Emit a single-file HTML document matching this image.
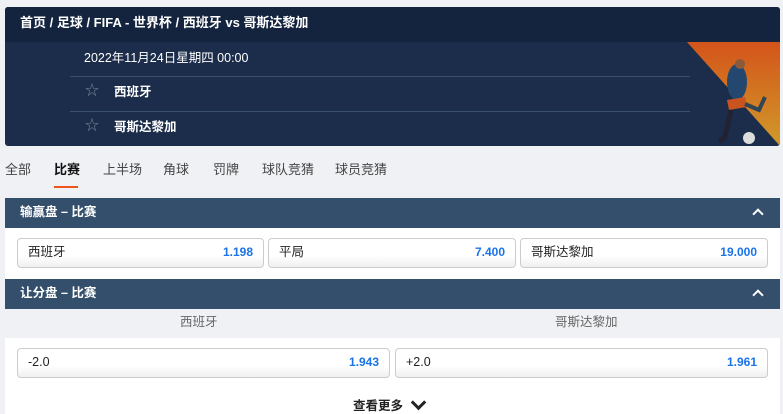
<!DOCTYPE html><html><head><meta charset="utf-8"><style>
*{box-sizing:border-box;margin:0;padding:0}
body{width:783px;height:414px;overflow:hidden;background:#f0f1f5;font-family:"Liberation Sans","Noto Sans CJK SC",sans-serif;font-size:12px;color:#222;position:relative;line-height:1.2}
.abs{position:absolute}
.hd{left:5px;top:7px;width:775px;height:139px;background:#1b2d4a;border-radius:3px;overflow:hidden}
.bc{left:0;top:0;width:775px;height:35px;background:#14243f;color:#fff;font-weight:bold;font-size:13px;padding:0 0 0 15px;line-height:32px}
.line{height:1px;background:#3a5070;left:65px;width:620px}
.t{color:#fff;font-size:12.5px}
.star{color:#7b8699;font-size:14px}
.tab{top:162px;font-size:13px;color:#444}
.sec{left:5px;width:775px;height:30px;background:#344f6b;color:#fff;font-weight:bold;font-size:12.5px;padding:0 0 0 15px;line-height:28px}
.car{right:18px;top:12px;width:8px;height:8px;border-left:2.5px solid #fff;border-top:2.5px solid #fff;transform:rotate(45deg)}
.wh{left:5px;width:775px;background:#fff}
.btn{height:30px;border:1px solid #ccc;border-radius:4px;background:linear-gradient(#fff 60%,#f0f0f0);padding:0 10px;font-size:12.5px;line-height:26px}
.btn b{float:right;color:#1a73e8;font-weight:bold;font-size:12px}
</style></head><body>
<div class="abs hd">
<div class="abs bc">首页 / 足球 / FIFA - 世界杯 / 西班牙 vs 哥斯达黎加</div>
<div class="abs t" style="left:79px;top:44px">2022年11月24日星期四 00:00</div>
<div class="abs line" style="top:69px"></div>
<div class="abs star" style="left:80px;top:75px">☆</div>
<div class="abs t" style="left:109px;top:78px;font-weight:bold">西班牙</div>
<div class="abs line" style="top:104px"></div>
<div class="abs star" style="left:80px;top:110px">☆</div>
<div class="abs t" style="left:109px;top:113px;font-weight:bold">哥斯达黎加</div>
<svg class="abs" style="left:682px;top:35px" width="93" height="104"><defs><linearGradient id="g" x1="0" y1="0" x2="0" y2="1"><stop offset="0" stop-color="#d4541a"/><stop offset="1" stop-color="#d09a2a"/></linearGradient></defs><polygon points="0,0 93,0 93,104" fill="url(#g)"/>
<ellipse cx="50" cy="40" rx="10" ry="18" fill="#23476e"/><circle cx="53" cy="22" r="5" fill="#8a5a3a"/><path d="M40 58 L58 55 L60 65 L42 68Z" fill="#c9541f"/><path d="M44 68 L38 95 L32 100" stroke="#223" stroke-width="5" fill="none"/><path d="M58 62 L72 68 L78 55" stroke="#345" stroke-width="4" fill="none"/><circle cx="62" cy="96" r="6" fill="#ddd"/></svg>
</div>
<div class="abs tab" style="left:5px">全部</div>
<div class="abs tab" style="left:54px;color:#111;font-weight:bold">比赛</div>
<div class="abs" style="left:54px;top:186px;width:24px;height:2px;background:#f0541e"></div>
<div class="abs tab" style="left:103px">上半场</div>
<div class="abs tab" style="left:163px">角球</div>
<div class="abs tab" style="left:213px">罚牌</div>
<div class="abs tab" style="left:262px">球队竞猜</div>
<div class="abs tab" style="left:335px">球员竞猜</div>
<div class="abs sec" style="top:198px">输赢盘 – 比赛<div class="abs car"></div></div>
<div class="abs wh" style="top:228px;height:51px"></div>
<div class="abs btn" style="left:17px;top:238px;width:247px">西班牙<b>1.198</b></div>
<div class="abs btn" style="left:268px;top:238px;width:248px">平局<b>7.400</b></div>
<div class="abs btn" style="left:520px;top:238px;width:248px">哥斯达黎加<b>19.000</b></div>
<div class="abs sec" style="top:279px">让分盘 – 比赛<div class="abs car"></div></div>
<div class="abs" style="left:180px;top:315px;color:#666;font-size:12.5px">西班牙</div>
<div class="abs" style="left:555px;top:315px;color:#666;font-size:12.5px">哥斯达黎加</div>
<div class="abs wh" style="top:338px;height:76px"></div>
<div class="abs btn" style="left:17px;top:348px;width:373px">-2.0<b>1.943</b></div>
<div class="abs btn" style="left:395px;top:348px;width:373px">+2.0<b>1.961</b></div>
<div class="abs" style="left:353px;top:399px;font-weight:bold;font-size:12.5px">查看更多</div>
<div class="abs" style="left:413px;top:397px;width:11px;height:11px;border-right:3px solid #222;border-bottom:3px solid #222;transform:rotate(45deg)"></div>
</body></html>
